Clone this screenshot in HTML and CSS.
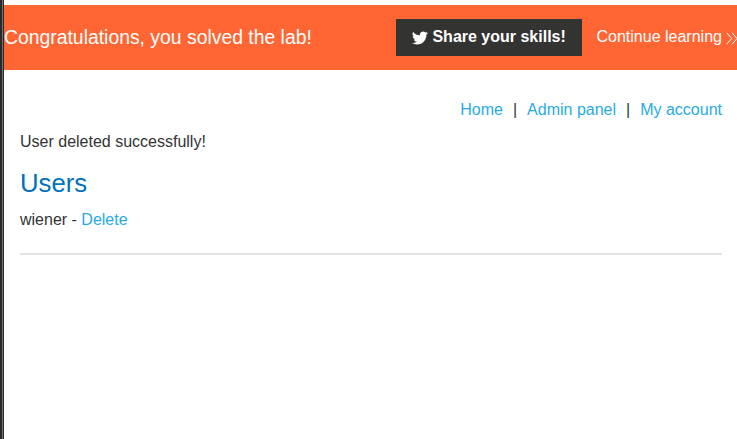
FILE: index.html
```html
<!DOCTYPE html>
<html lang="en">
<head>
<meta charset="utf-8">
<title>Users</title>
<link rel="stylesheet" href="styles.css">
</head>
<body>
<div class="edge"></div>
<div class="page">
  <header class="banner">
    <h4 class="banner-title">Congratulations, you solved the lab!</h4>
    <a class="share">
      <svg class="bird" viewBox="0 0 24 24"><path d="M23.95 4.57a10 10 0 0 1-2.82.77 4.96 4.96 0 0 0 2.16-2.72c-.95.55-2 .95-3.13 1.18a4.92 4.92 0 0 0-8.38 4.48C7.69 8.1 4.07 6.13 1.64 3.16a4.92 4.92 0 0 0 1.52 6.57 4.9 4.9 0 0 1-2.23-.61v.06a4.92 4.92 0 0 0 3.95 4.83 5 5 0 0 1-2.21.08 4.94 4.94 0 0 0 4.6 3.42A9.87 9.87 0 0 1 0 19.54a14 14 0 0 0 7.55 2.21c9.05 0 14-7.5 14-13.98l-.02-.63a9.94 9.94 0 0 0 2.42-2.57z"/></svg>
      <span>Share your skills!</span>
    </a>
    <a class="continue">
      <span>Continue learning</span>
      <svg class="chevrons" viewBox="0 0 12 13"><path d="M.7.7 5.7 6.5.7 12.3M6 .7l5 5.8-5 5.8"/></svg>
    </a>
  </header>
  <main class="content">
    <nav class="nav"><a>Home</a><span>|</span><a>Admin panel</a><span>|</span><a>My account</a></nav>
    <p class="message">User deleted successfully!</p>
    <h1 class="heading">Users</h1>
    <div class="user">wiener - <a>Delete</a></div>
    <hr class="rule">
  </main>
</div>
</body>
</html>
```

FILE: styles.css
```css
* { box-sizing: border-box; }
body {
  margin: 0;
  height: 439px;
  display: flex;
  overflow: hidden;
  background: #fff;
  color: #333332;
  font: 16px/20px "Liberation Sans", Arial, sans-serif;
}
a { color: #29abe2; }
.edge {
  flex: 0 0 4px;
  background: linear-gradient(90deg, #2b2a28 0 2px, #747371 2px 3px, #2b2a28 3px 4px);
}
.page { flex: 1; min-width: 0; padding-top: 5px; }
.banner {
  display: flex;
  align-items: center;
  height: 65px;
  background: #ff6633;
  color: #fff;
  white-space: nowrap;
  overflow: hidden;
}
.banner-title {
  margin: 0 0 2px;
  width: 392px;
  flex: none;
  font-size: 19.36px;
  font-weight: 400;
}
.share {
  display: flex;
  flex: none;
  align-items: center;
  width: 186px;
  height: 37px;
  padding-left: 16px;
  gap: 4.45px;
  background: #333332;
  color: #fff;
  font-weight: 700;
}
.share span, .continue span { position: relative; top: -1px; }
.bird { width: 16px; height: 16px; fill: #fff; }
.continue {
  display: flex;
  flex: none;
  align-items: center;
  margin-left: 14.5px;
  gap: 4.5px;
  color: #fff;
}
.chevrons {
  width: 12px;
  height: 13px;
  margin-top: 1px;
  fill: none;
  stroke: #fff;
  stroke-width: 1;
}
.content { padding: 30px 15px 0 16px; }
.nav { display: flex; justify-content: flex-end; gap: 10px; }
.message { margin: 12px 0 0; }
.heading {
  margin: 15px 0 0;
  font-size: 25.7px;
  line-height: 32px;
  font-weight: 400;
  color: #0071bc;
}
.user { margin-top: 11px; }
.rule { height: 2px; margin: 23px 0 0; border: 0; background: #e3e3e3; }
```
